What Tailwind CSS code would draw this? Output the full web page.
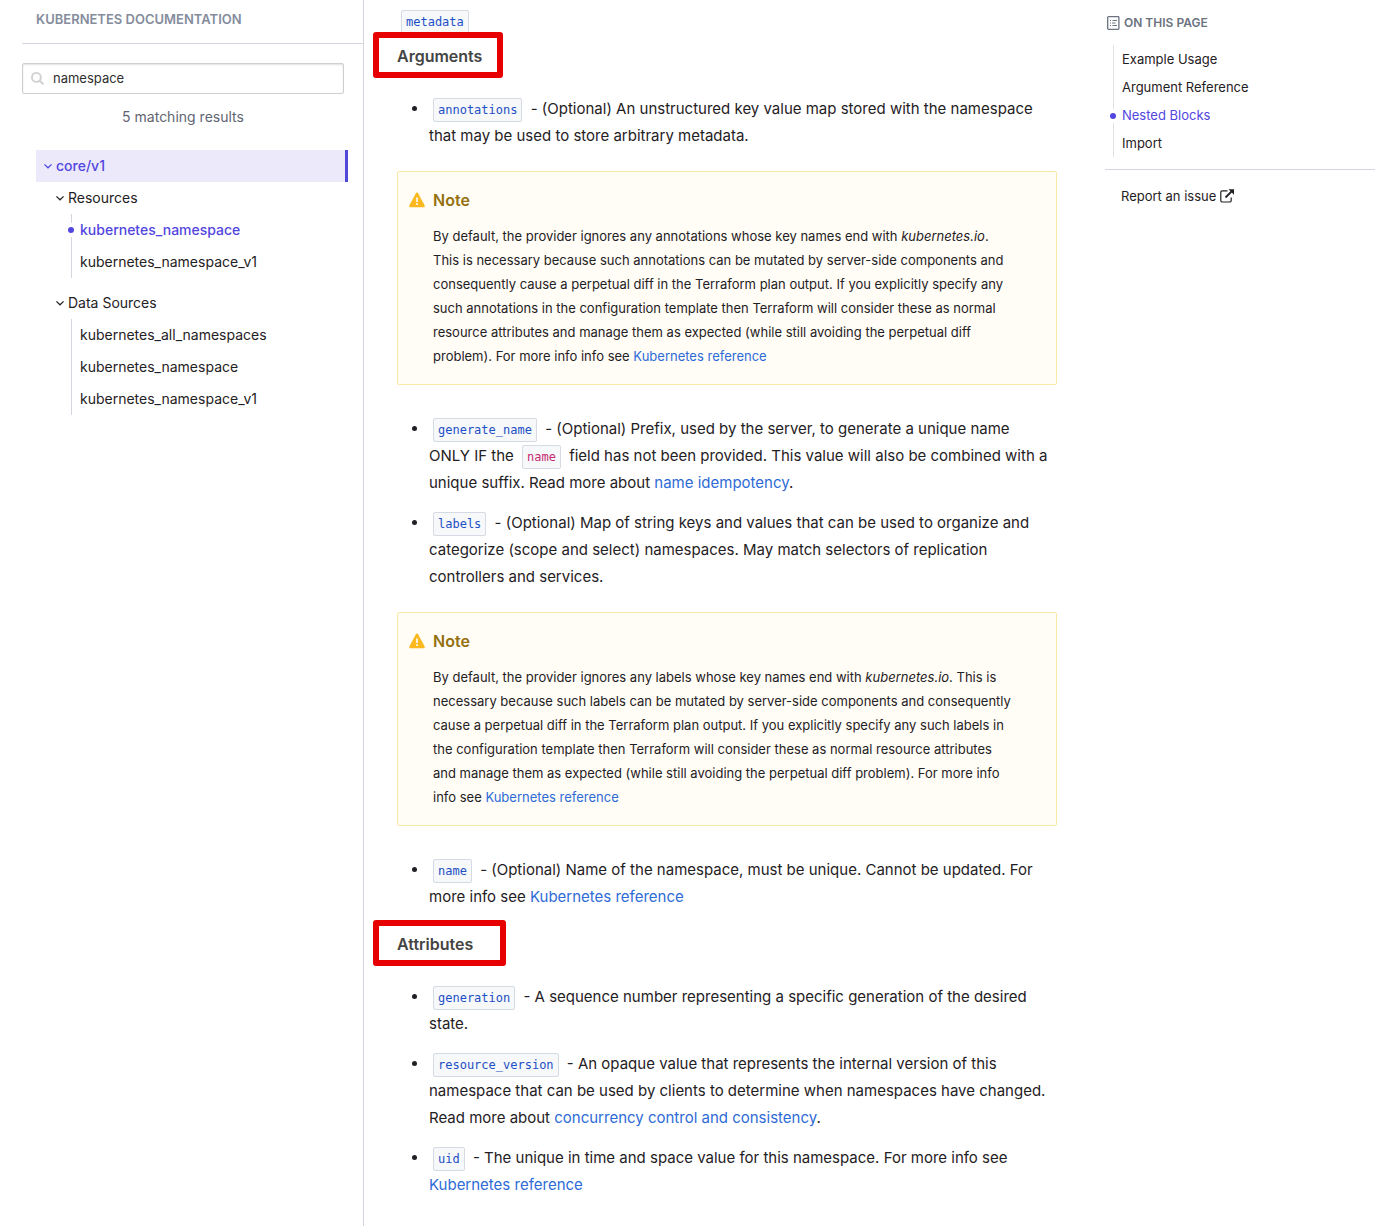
<!DOCTYPE html>
<html lang="en">
<head>
<meta charset="utf-8">
<meta name="viewport" content="width=device-width, initial-scale=1">
<title>Kubernetes Documentation</title>
<script src="https://cdn.jsdelivr.net/npm/@tailwindcss/browser@4"></script>
</head>
<body class="bg-white font-['Inter','Liberation_Sans',sans-serif] text-[#1f2124]">
<div class="flex min-h-screen">

  <nav aria-label="Documentation" class="w-[364px] shrink-0 border-r border-[#d5d7de] pl-[22px] text-sm">
    <h2 class="border-b border-[#d5d7de] pt-2 pb-3 pl-[14px] text-[13px] leading-[23px] font-semibold text-[#858c9c]">KUBERNETES DOCUMENTATION</h2>
    <div class="pr-[19px]">
      <label class="mt-[19px] flex h-[31px] items-center gap-[9px] rounded-xs border border-[#cfcfcf] px-2 shadow-[inset_0_1px_2px_rgba(0,0,0,0.12)]">
        <svg class="size-[13px] shrink-0" viewBox="0 0 14 14" fill="none" stroke="#d0d0d0" stroke-width="2" stroke-linecap="round" aria-hidden="true"><circle cx="5.8" cy="5.8" r="4.8"/><path d="M9.4 9.4l3.4 3.2"/></svg>
        <input type="text" value="namespace" aria-label="Filter" class="w-full min-w-0 bg-transparent text-[13px] text-[#2f2f2f] outline-none">
      </label>
      <p class="pt-3 text-center leading-[22px] text-[#5f6572]">5 matching results</p>
    </div>
    <div class="mt-[22px] mr-[15px] ml-[14px]">
      <a href="#" class="flex h-8 items-center gap-1 border-r-[3px] border-[#5048d8] bg-[#ece9fa] pl-2 font-medium text-[#5246e0]">
        <svg class="size-2" viewBox="0 0 8 8" fill="none" stroke="currentColor" stroke-width="1.2" aria-hidden="true"><path d="M0.4 2.4L4 5.8L7.6 2.4"/></svg>core/v1</a>
      <div class="pl-5">
        <a href="#" class="flex h-8 items-center gap-1">
          <svg class="size-2" viewBox="0 0 8 8" fill="none" stroke="currentColor" stroke-width="1.2" aria-hidden="true"><path d="M0.4 2.4L4 5.8L7.6 2.4"/></svg>Resources</a>
        <ul class="ml-[15px] border-l border-[#d5d7de] leading-8">
          <li class="relative pl-2"><span class="absolute top-[9px] -left-1 flex h-[14px] w-[7px] items-center bg-white"><span class="size-[6px] rounded-full bg-[#5246e0]"></span></span><a href="#" class="font-medium text-[#5246e0]">kubernetes_namespace</a></li>
          <li class="pl-2"><a href="#">kubernetes_namespace_v1</a></li>
        </ul>
        <a href="#" class="mt-[9px] flex h-8 items-center gap-1">
          <svg class="size-2" viewBox="0 0 8 8" fill="none" stroke="currentColor" stroke-width="1.2" aria-hidden="true"><path d="M0.4 2.4L4 5.8L7.6 2.4"/></svg>Data Sources</a>
        <ul class="ml-[15px] border-l border-[#d5d7de] leading-8">
          <li class="pl-2"><a href="#">kubernetes_all_namespaces</a></li>
          <li class="pl-2"><a href="#">kubernetes_namespace</a></li>
          <li class="pl-2"><a href="#">kubernetes_namespace_v1</a></li>
        </ul>
      </div>
    </div>
  </nav>

  <main class="min-w-0 flex-1 pt-[7px] pr-12 pl-[33px] text-[15px] leading-[27px]">
    <p><code class="mx-1 rounded-xs border border-[#d5dae3] bg-[#f6f8fa] px-1 py-1 font-['DejaVu_Sans_Mono',monospace] text-xs text-[#1d4fc4]">metadata</code></p>
    <h4 class="relative mt-[10px] mb-[27px] text-base leading-6 font-semibold text-[#444]">Arguments<span class="absolute -top-3 -left-6 h-[46px] w-[130px] rounded-[3px] border-6 border-[#e60000]"></span></h4>
    <ul class="list-disc pl-8">
      <li><code class="mx-1 rounded-xs border border-[#d5dae3] bg-[#f6f8fa] px-1 py-1 font-['DejaVu_Sans_Mono',monospace] text-xs text-[#1d4fc4]">annotations</code> - (Optional) An unstructured key value map stored with the namespace that may be used to store arbitrary metadata.</li>
    </ul>

    <div class="mt-[22px] mb-[30px] rounded-xs border border-[#fae9a3] bg-[#fffdf6] pt-4 pr-[15px] pb-4 pl-[11px]">
      <h5 class="flex items-center gap-2 text-base leading-6 font-semibold text-[#94700f]"><svg class="size-4" viewBox="0 0 16 16" aria-hidden="true"><path fill="#fbb91f" d="M8 0.6c.5 0 .9.3 1.100.6l6.500 12c.5 1-.1 2-1.200 2H1.600c-1.100 0-1.700-1-1.200-2l6.500-12C7.100.9 7.500.6 8 .6z"/><path stroke="#fffdf6" stroke-width="1.700" d="M8 5.500v4.500M8 11.200v1.800"/></svg>Note</h5>
      <p class="mt-3 pl-6 text-[13px] leading-6">By default, the provider ignores any annotations whose key names end with <em>kubernetes.io</em>.<br>This is necessary because such annotations can be mutated by server-side components and<br>consequently cause a perpetual diff in the Terraform plan output. If you explicitly specify any<br>such annotations in the configuration template then Terraform will consider these as normal<br>resource attributes and manage them as expected (while still avoiding the perpetual diff<br>problem). For more info info see <a href="#" class="text-[#2e6bd6]">Kubernetes reference</a></p>
    </div>

    <ul class="list-disc space-y-[13px] pl-8">
      <li><code class="mx-1 rounded-xs border border-[#d5dae3] bg-[#f6f8fa] px-1 py-1 font-['DejaVu_Sans_Mono',monospace] text-xs text-[#1d4fc4]">generate_name</code> - (Optional) Prefix, used by the server, to generate a unique name<br>ONLY IF the <code class="mx-1 rounded-xs border border-[#d5dae3] bg-[#f6f8fa] px-1 py-1 font-['DejaVu_Sans_Mono',monospace] text-xs text-[#c62a70]">name</code> field has not been provided. This value will also be combined with a<br>unique suffix. Read more about <a href="#" class="text-[#2e6bd6]">name idempotency</a>.</li>
      <li><code class="mx-1 rounded-xs border border-[#d5dae3] bg-[#f6f8fa] px-1 py-1 font-['DejaVu_Sans_Mono',monospace] text-xs text-[#1d4fc4]">labels</code> - (Optional) Map of string keys and values that can be used to organize and categorize (scope and select) namespaces. May match selectors of replication controllers and services.</li>
    </ul>

    <div class="mt-[22px] mb-[30px] rounded-xs border border-[#fae9a3] bg-[#fffdf6] pt-4 pr-[15px] pb-4 pl-[11px]">
      <h5 class="flex items-center gap-2 text-base leading-6 font-semibold text-[#94700f]"><svg class="size-4" viewBox="0 0 16 16" aria-hidden="true"><path fill="#fbb91f" d="M8 0.6c.5 0 .9.3 1.100.6l6.500 12c.5 1-.1 2-1.200 2H1.600c-1.100 0-1.700-1-1.200-2l6.500-12C7.100.9 7.500.6 8 .6z"/><path stroke="#fffdf6" stroke-width="1.700" d="M8 5.500v4.500M8 11.200v1.800"/></svg>Note</h5>
      <p class="mt-3 pl-6 text-[13px] leading-6">By default, the provider ignores any labels whose key names end with <em>kubernetes.io</em>. This is<br>necessary because such labels can be mutated by server-side components and consequently<br>cause a perpetual diff in the Terraform plan output. If you explicitly specify any such labels in<br>the configuration template then Terraform will consider these as normal resource attributes<br>and manage them as expected (while still avoiding the perpetual diff problem). For more info<br>info see <a href="#" class="text-[#2e6bd6]">Kubernetes reference</a></p>
    </div>

    <ul class="list-disc pl-8">
      <li><code class="mx-1 rounded-xs border border-[#d5dae3] bg-[#f6f8fa] px-1 py-1 font-['DejaVu_Sans_Mono',monospace] text-xs text-[#1d4fc4]">name</code> - (Optional) Name of the namespace, must be unique. Cannot be updated. For more info see <a href="#" class="text-[#2e6bd6]">Kubernetes reference</a></li>
    </ul>

    <h4 class="relative mt-[22px] mb-[27px] text-base leading-6 font-semibold text-[#444]">Attributes<span class="absolute -top-3 -left-6 h-[46px] w-[133px] rounded-[3px] border-6 border-[#e60000]"></span></h4>
    <ul class="list-disc space-y-[13px] pl-8">
      <li><code class="mx-1 rounded-xs border border-[#d5dae3] bg-[#f6f8fa] px-1 py-1 font-['DejaVu_Sans_Mono',monospace] text-xs text-[#1d4fc4]">generation</code> - A sequence number representing a specific generation of the desired state.</li>
      <li><code class="mx-1 rounded-xs border border-[#d5dae3] bg-[#f6f8fa] px-1 py-1 font-['DejaVu_Sans_Mono',monospace] text-xs text-[#1d4fc4]">resource_version</code> - An opaque value that represents the internal version of this namespace that can be used by clients to determine when namespaces have changed. Read more about <a href="#" class="text-[#2e6bd6]">concurrency control and consistency</a>.</li>
      <li><code class="mx-1 rounded-xs border border-[#d5dae3] bg-[#f6f8fa] px-1 py-1 font-['DejaVu_Sans_Mono',monospace] text-xs text-[#1d4fc4]">uid</code> - The unique in time and space value for this namespace. For more info see <a href="#" class="text-[#2e6bd6]">Kubernetes reference</a></li>
    </ul>
  </main>

  <aside class="w-[285px] shrink-0 pt-3 pr-[15px] text-[13px]">
    <h2 class="flex items-center gap-1 pl-[2px] text-xs leading-[22px] font-semibold text-[#6b7280]">
      <svg class="h-[14px] w-[13px]" viewBox="0 0 13 14" fill="none" stroke="#6b7280" aria-hidden="true"><rect x="0.7" y="0.7" width="11.200" height="12.600" rx="0.800" stroke-width="1.300"/><path stroke-width="1" d="M3 4.500h1M5.500 4.500h4.500M3 7h1M5 7h3.500M3 9.500h1M5.500 9.500h4.500"/></svg>ON THIS PAGE</h2>
    <ul class="mt-[11px] ml-2 border-l border-[#dfe1e6] leading-7">
      <li class="pl-2"><a href="#">Example Usage</a></li>
      <li class="pl-2"><a href="#">Argument Reference</a></li>
      <li class="relative pl-2"><span class="absolute top-[8px] -left-1 flex h-[14px] w-[7px] items-center bg-white"><span class="size-[6px] rounded-full bg-[#5246e0]"></span></span><a href="#" class="text-[#5246e0]">Nested Blocks</a></li>
      <li class="pl-2"><a href="#">Import</a></li>
    </ul>
    <div class="mt-3 border-t border-[#d5d7de] pt-3 pl-4">
      <a href="#" class="flex items-center gap-1 leading-7">Report an issue
        <svg class="size-[14px]" viewBox="0 0 14 14" fill="none" stroke="currentColor" aria-hidden="true"><path stroke-width="1.200" d="M7.500 1.800H2.400c-1 0-1.600.6-1.600 1.600v8c0 1 .6 1.600 1.600 1.600h7.200c1 0 1.600-.6 1.600-1.600V8.500"/><path stroke-width="1.800" d="M5.500 8.500L12 2"/><path fill="currentColor" stroke="none" d="M8.500.2H14v5.500z"/></svg></a>
    </div>
  </aside>
</div>
</body>
</html>
